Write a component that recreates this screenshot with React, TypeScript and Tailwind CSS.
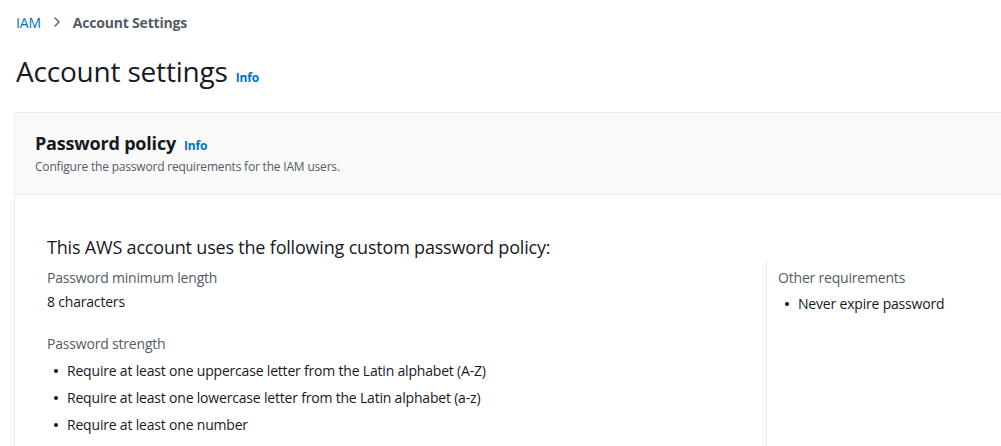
import { ChevronRight } from "lucide-react";

const strength = [
  "Require at least one uppercase letter from the Latin alphabet (A-Z)",
  "Require at least one lowercase letter from the Latin alphabet (a-z)",
  "Require at least one number",
];

function Bullet({ children }: { children: string }) {
  return (
    <li className="flex h-[27px] items-center">
      <span className="mr-[9px] ml-[7px] h-[4px] w-[4px] rounded-full bg-[#16191f]" />
      <span>{children}</span>
    </li>
  );
}

export default function App() {
  return (
    <div
      className="h-[446px] w-[1001px] overflow-hidden bg-white tracking-[-0.012em] text-[#16191f]"
      style={{ fontFamily: '"Open Sans", "Noto Sans", sans-serif' }}
    >
      <nav className="mt-[12px] flex h-[20px] items-center px-4 text-[14px]">
        <a className="text-[#0073bb]" href="#">
          IAM
        </a>
        <ChevronRight className="mx-[8px] h-4 w-4 text-[#545b64]" strokeWidth={2} />
        <span className="font-bold text-[#545b64]">Account Settings</span>
      </nav>

      <div className="mt-[21px] flex items-baseline px-4">
        <h1 className="text-[28px] leading-[36px] font-normal">Account settings</h1>
        <a className="ml-[8px] text-[12px] font-bold text-[#0073bb]" href="#">
          Info
        </a>
      </div>

      <section className="mt-[23px] ml-[14px] border-y border-l border-[#eaeded]">
        <header className="h-[82px] border-b border-[#eaeded] bg-[#fafafa] px-5 pt-[17px]">
          <div className="flex items-baseline">
            <h2 className="text-[18px] leading-[26px] font-bold">Password policy</h2>
            <a className="ml-[8px] text-[12px] font-bold text-[#0073bb]" href="#">
              Info
            </a>
          </div>
          <p className="mt-[3px] text-[12px] leading-[16px] text-[#545b64]">
            Configure the password requirements for the IAM users.
          </p>
        </header>

        <div className="pt-[39px] pl-[32px]">
          <h3 className="text-[18px] leading-[26px] font-normal">
            This AWS account uses the following custom password policy:
          </h3>
          <div className="flex text-[14px]">
            <div className="w-[720px] border-r border-[#eaeded] pt-[6px]">
              <div className="leading-[24px] text-[#545b64]">Password minimum length</div>
              <div className="leading-[24px]">8 characters</div>
              <div className="mt-[18px] leading-[24px] text-[#545b64]">Password strength</div>
              <ul className="mt-[1px] pb-2">
                {strength.map((s) => (
                  <Bullet key={s}>{s}</Bullet>
                ))}
              </ul>
            </div>
            <div className="pt-[6px] pl-[11px]">
              <div className="leading-[24px] text-[#545b64]">Other requirements</div>
              <ul>
                <Bullet>Never expire password</Bullet>
              </ul>
            </div>
          </div>
        </div>
      </section>
    </div>
  );
}
